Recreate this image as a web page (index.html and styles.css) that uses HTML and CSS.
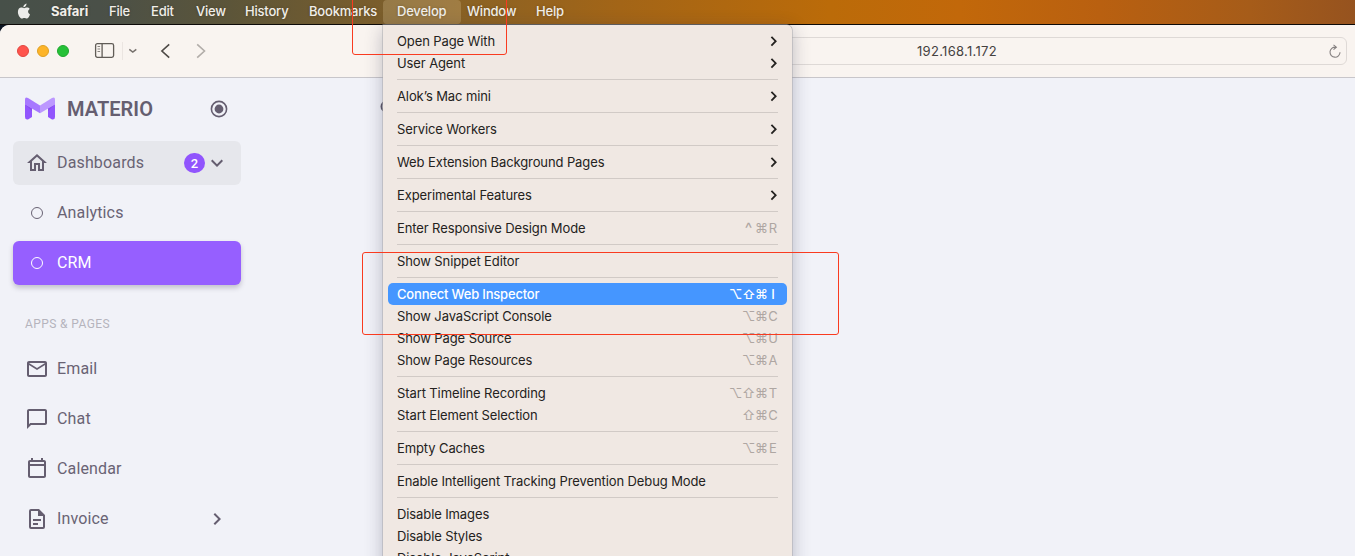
FILE: index.html
```html
<!DOCTYPE html>
<html lang="en">
<head>
<meta charset="utf-8">
<title>Safari Develop menu</title>
<link rel="stylesheet" href="styles.css">
</head>
<body>
<svg class="defs" width="0" height="0">
  <symbol id="chev" viewBox="0 0 8 12"><path d="M1.400 1.800 5.700 6.200 1.400 10.600" fill="none" stroke="currentColor" stroke-width="1.800"/></symbol>
</svg>
<div class="screen">
  <header class="menubar">
    <svg class="apple" width="14" height="17" viewBox="0 0 14 17"><path fill="#ececea" d="M9.5.6c.1 1.200-.4 2-1 2.700-.6.700-1.300 1.100-2.100 1C6.300 3.200 6.800 2.400 7.400 1.800 8 1.100 8.800.7 9.500.6zM12.700 5.900c-1 .6-1.600 1.500-1.600 2.700 0 1.300.8 2.300 1.900 2.800-.5 1.600-1.900 4.200-3.300 4.200-.9 0-1.300-.5-2.400-.5s-1.500.5-2.400.5C3.300 15.600.9 12.100.9 9c0-2.900 1.700-4.400 3.400-4.400 1.100 0 2 .7 2.800.7.700 0 1.700-.7 2.900-.7 1.100 0 2.100.5 2.700 1.300z"/></svg>
    <span class="app">Safari</span><span>File</span><span>Edit</span><span>View</span><span>History</span><span>Bookmarks</span><span class="open">Develop</span><span>Window</span><span>Help</span>
  </header>
  <main class="window">
    <div class="toolbar">
      <i class="light red"></i><i class="light amber"></i><i class="light green"></i>
      <svg class="tools" width="124" height="24" viewBox="0 0 124 24" fill="none">
        <rect x="1.600" y="4.600" width="18" height="13.800" rx="1.800" stroke="#615c57" stroke-width="1.300"/>
        <path d="M8.100 4.600v13.800" stroke="#615c57" stroke-width="1.300"/>
        <path d="M3.500 7.500h2.600M3.500 10h2.600M3.500 12.500h2.600" stroke="#8a8580"/>
        <path d="M28.500 3v18" stroke="#ebe5e1"/>
        <path d="m35.300 10.300 3.500 2.700 3.500-2.700" stroke="#77716d" stroke-width="1.500"/>
        <path d="m75.200 5.300-7.300 6.700 7.300 6.700" stroke="#4e4a46" stroke-width="1.600"/>
        <path d="m103.200 5.300 7.300 6.700-7.300 6.700" stroke="#b2ada9" stroke-width="1.600"/>
      </svg>
      <div class="address"><span>192.168.1.172</span>
        <svg width="14" height="15" viewBox="0 0 14 15" fill="none" stroke="#858080" stroke-width="1.100"><path d="M7.500 3.200A5 5 0 1 0 12 8.200M5.500.8l2.900 2.400-2.900 2.500"/></svg>
      </div>
    </div>
    <div class="page">
      <nav class="sidebar">
        <div class="brand">
          <svg width="30" height="23" viewBox="0 0 30 23">
            <path fill="#9155fd" d="M0 7l7 4v9L3 22.500Q0 23 0 20zM30 7l-7 4v9l4 2.500q3 .5 3-2.500z"/>
            <path fill="#8048e0" fill-opacity=".5" d="M0 7l7 4.300v3zM30 7l-7 4.300v3z"/>
            <path fill="#a778ff" d="M0 2.500Q0-.5 3 1l12 7.500v7.700L0 7.500z"/>
            <path fill="#bc98ff" d="M30 2.500Q30-.5 27 1L15 8.500v7.700L30 7.500z"/>
          </svg>
          <b>MATERIO</b>
          <svg class="pin" width="18" height="18" viewBox="0 0 18 18"><circle cx="9" cy="9" r="7.600" fill="none" stroke="#655e70" stroke-width="1.600"/><circle cx="9" cy="9" r="4.400" fill="#655e70"/></svg>
        </div>
        <div class="nav group">
          <svg width="20" height="20" viewBox="0 0 24 24"><path fill="currentColor" d="M12 5.690l5 4.500V18h-2v-6H9v6H7v-7.810l5-4.500M12 3L2 12h3v8h6v-6h2v6h6v-8h3"/></svg>
          <span>Dashboards</span><em>2</em>
          <svg class="arrow" width="24" height="24" viewBox="0 0 24 24"><path fill="currentColor" d="M7.410 8.580 12 13.170l4.590-4.590L18 10l-6 6-6-6z"/></svg>
        </div>
        <div class="nav"><i class="ring"></i><span>Analytics</span></div>
        <div class="nav active"><i class="ring"></i><span>CRM</span></div>
        <h2>APPS &amp; PAGES</h2>
        <div class="nav"><svg width="24" height="24" viewBox="0 0 24 24"><path fill="currentColor" d="M22 6c0-1.100-.9-2-2-2H4c-1.100 0-2 .9-2 2v12c0 1.100.9 2 2 2h16c1.100 0 2-.9 2-2V6m-2 0-8 5-8-5h16m0 12H4V8l8 5 8-5z"/></svg><span>Email</span></div>
        <div class="nav"><svg width="24" height="24" viewBox="0 0 24 24"><path fill="currentColor" d="M20 2H4c-1.100 0-2 .9-2 2v18l4-4h14c1.100 0 2-.9 2-2V4c0-1.100-.9-2-2-2m0 14H5.200L4 17.200V4h16z"/></svg><span>Chat</span></div>
        <div class="nav"><svg width="24" height="24" viewBox="0 0 24 24"><path fill="currentColor" d="M19 3h-1V1h-2v2H8V1H6v2H5c-1.110 0-2 .9-2 2v14c0 1.100.9 2 2 2h14c1.100 0 2-.9 2-2V5c0-1.100-.9-2-2-2m0 16H5V9h14zm0-12H5V5h14z"/></svg><span>Calendar</span></div>
        <div class="nav"><svg width="24" height="24" viewBox="0 0 24 24"><path fill="currentColor" d="M14 2H6a2 2 0 0 0-2 2v16a2 2 0 0 0 2 2h12a2 2 0 0 0 2-2V8zm4 18H6V4h7v5h5zM8 12h8v2H8zm0 4h5v2H8z"/></svg><span>Invoice</span>
          <svg class="arrow" width="24" height="24" viewBox="0 0 24 24"><path fill="currentColor" d="M8.590 16.580 13.170 12 8.590 7.410 10 6l6 6-6 6z"/></svg></div>
      </nav>
      <svg class="search" width="16" height="16" viewBox="0 0 16 16" fill="none" stroke="#5f5969" stroke-width="2"><circle cx="6.500" cy="6.500" r="5"/><path d="m10 10 5 5"/></svg>
    </div>
  </main>

  <div class="menu">
    <div class="row">Open Page With<svg><use href="#chev"/></svg></div>
    <div class="row">User Agent<svg><use href="#chev"/></svg></div>
    <hr>
    <div class="row">Alok’s Mac mini<svg><use href="#chev"/></svg></div>
    <hr>
    <div class="row">Service Workers<svg><use href="#chev"/></svg></div>
    <hr>
    <div class="row">Web Extension Background Pages<svg><use href="#chev"/></svg></div>
    <hr>
    <div class="row">Experimental Features<svg><use href="#chev"/></svg></div>
    <hr>
    <div class="row">Enter Responsive Design Mode<kbd><i class="ctrl">^</i><i>⌘</i><i>R</i></kbd></div>
    <hr>
    <div class="row">Show Snippet Editor</div>
    <hr>
    <div class="row selected">Connect Web Inspector<kbd><i>⌥</i><i>⇧</i><i>⌘</i><i>I</i></kbd></div>
    <div class="row">Show JavaScript Console<kbd><i>⌥</i><i>⌘</i><i>C</i></kbd></div>
    <div class="row">Show Page Source<kbd><i>⌥</i><i>⌘</i><i>U</i></kbd></div>
    <div class="row">Show Page Resources<kbd><i>⌥</i><i>⌘</i><i>A</i></kbd></div>
    <hr>
    <div class="row">Start Timeline Recording<kbd><i>⌥</i><i>⇧</i><i>⌘</i><i>T</i></kbd></div>
    <div class="row">Start Element Selection<kbd><i>⇧</i><i>⌘</i><i>C</i></kbd></div>
    <hr>
    <div class="row">Empty Caches<kbd><i>⌥</i><i>⌘</i><i>E</i></kbd></div>
    <hr>
    <div class="row">Enable Intelligent Tracking Prevention Debug Mode</div>
    <hr>
    <div class="row">Disable Images</div>
    <div class="row">Disable Styles</div>
    <div class="row">Disable JavaScript</div>
  </div>
  <div class="mark mark-menu"></div>
  <div class="mark mark-item"></div>
</div>
</body>
</html>
```

FILE: styles.css
```css
* { box-sizing: border-box; }
body { margin: 0; overflow: hidden; }
.defs { position: absolute; }
.screen {
  position: relative; width: 1355px; height: 556px; overflow: hidden;
  display: flex; flex-direction: column; background: #0c1522;
  font: 13px/22px Inter, sans-serif;
}
.menubar {
  height: 24px; flex: none; margin-bottom: 1px; padding-left: 17px;
  display: grid; grid-template-columns: 34px 58px 42px 45px 49px 64px 74px 84px 69px auto;
  line-height: 23px; font-weight: 500; letter-spacing: -.2px; color: #f1eee9; white-space: nowrap;
  text-shadow: 0 0 3px rgba(0,0,0,.25);
  background: linear-gradient(90deg, #475049 0, #4a5048 100px, #5c5539 230px, #755c2e 350px, #8b6224 470px, #a36517 620px, #bb6b09 830px, #c2680a 960px, #b96010 1100px, #a65c19 1250px, #96531f 1355px);
  box-shadow: 0 1px #0d0a08;
}
.apple { margin-top: 3px; }
.app { font-weight: 700; letter-spacing: -.05px; }
.open { width: 78px; padding-left: 14px; border-radius: 4px; background: rgba(255,235,190,.2); }
.window { flex: 1; display: flex; flex-direction: column; border-radius: 9px 0 0; overflow: hidden; background: #f1f2f8; }
.toolbar {
  height: 53px; flex: none; display: flex; align-items: center; padding: 0 8px 0 17px;
  background: #f9f4f0; border-bottom: 1px solid #c8c6ca;
}
.light { width: 12px; height: 12px; border-radius: 50%; margin-right: 8px; border: 1px solid; }
.red { background: #ff544d; border-color: #e24640; }
.amber { background: #fdb429; border-color: #dfa023; }
.green { background: #26c138; border-color: #1fa82e; }
.tools { margin: 0 0 0 17px; }
.address {
  flex: 1; margin-left: 349px; height: 28px; border: 1px solid #ded9d6; border-radius: 6px;
  display: flex; align-items: center; justify-content: space-between; padding: 0 4px 0 349px;
  color: #45423f; letter-spacing: .3px;
}
.page { position: relative; flex: 1; }
.sidebar { width: 241px; padding: 0 0 0 13px; font: 16px/24px Roboto, sans-serif; letter-spacing: .15px; color: #696374; }
.brand { height: 63px; display: flex; align-items: center; padding: 0 13px 2px 12px; }
.brand b { margin-left: 12px; font-size: 20px; font-weight: 600; letter-spacing: .05px; color: #655e70; }
.pin { margin-left: auto; }
.nav { height: 44px; margin-bottom: 6px; padding: 0 12px; display: flex; align-items: center; border-radius: 6px; }
.nav > svg:first-child { width: 24px; height: 24px; margin-right: 8px; color: #655e70; }
.arrow { color: #655e70; margin-left: auto; }
.group { background: #e6e7ec; }
.group em {
  margin-left: auto; width: 21px; height: 20px; border-radius: 10px;
  background: #9155fd; color: #fff; text-align: center; font: 500 13px/21px Roboto, sans-serif;
}
.group .arrow { margin-left: 0; }
.ring { width: 12px; height: 12px; border: 1.500px solid currentColor; border-radius: 50%; margin: 0 14px 0 6px; }
.active { background: #965fff; color: #fff; box-shadow: 0 3px 5px rgba(60,50,80,.25); }
.sidebar h2 { margin: 0; height: 56px; padding: 0 12px; font: 400 12px/66px Roboto, sans-serif; letter-spacing: .4px; color: #b5b4bd; }
.search { position: absolute; left: 380px; top: 22px; }
.menu {
  position: absolute; left: 383px; top: 25px; width: 409px; height: 560px; padding: 5px;
  border-radius: 0 5px 0 0; background: #f0e8e3; color: #242220; letter-spacing: -.105px;
  box-shadow: 0 0 0 .500px #a9a9ae, 0 4px 18px rgba(40,40,70,.3);
}
.row { height: 22px; padding: 0 9px; border-radius: 5px; display: flex; align-items: center; justify-content: space-between; white-space: nowrap; }
.row svg { width: 8px; height: 12px; }
.menu hr { height: 1px; margin: 5px 9px; border: 0; background: #d1cac6; }
.selected { background: #4596ff; color: #fff; font-weight: 500; letter-spacing: -.19px; }
kbd { display: flex; font: inherit; letter-spacing: 0; color: #aea6a2; }
kbd i { width: 13px; font-style: normal; text-align: center; }
kbd i:last-child { width: 10px; }
kbd .ctrl { font-size: 16px; }
.selected kbd { color: #fff; }
.mark { position: absolute; border: 1px solid #f93b20; border-radius: 3px; }
.mark-menu { left: 352px; top: -4px; width: 155px; height: 59px; }
.mark-item { left: 362px; top: 252px; width: 477px; height: 83px; }
```
